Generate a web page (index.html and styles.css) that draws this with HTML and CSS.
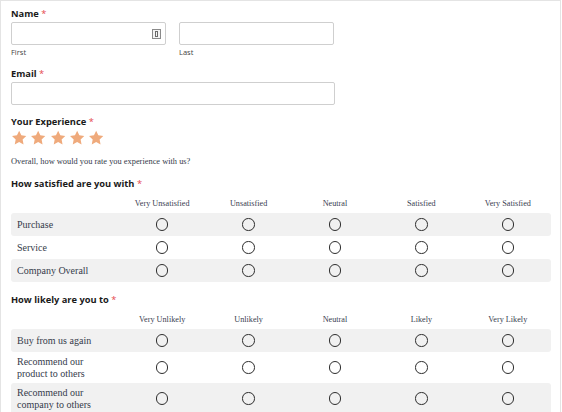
FILE: index.html
```html
<!DOCTYPE html>
<html>
<head>
<meta charset="utf-8">
<link rel="stylesheet" href="styles.css">
</head>
<body>
<div class="form">
  <div class="field">
    <div class="label">Name <span class="req">*</span></div>
    <div class="name-row">
      <div class="name-col">
        <div class="input">
          <svg class="autofill" width="9" height="10" viewBox="0 0 9 10"><rect x="0.5" y="0.5" width="8" height="9" fill="#f4f4f4" stroke="#8a8a8a"/><rect x="3.5" y="2.5" width="2" height="5" fill="none" stroke="#6a6a6a"/></svg>
        </div>
        <div class="sublabel">First</div>
      </div>
      <div class="name-col">
        <div class="input"></div>
        <div class="sublabel">Last</div>
      </div>
    </div>
  </div>

  <div class="field field-email">
    <div class="label">Email <span class="req">*</span></div>
    <div class="input input-wide"></div>
  </div>

  <div class="field field-exp">
    <div class="label">Your Experience <span class="req">*</span></div>
    <div class="stars">
      <svg class="star" viewBox="0 0 24 24"><path d="M12 1.2l3.2 6.7 7.3.9-5.4 5.1 1.4 7.3L12 17.6l-6.5 3.6 1.4-7.3-5.4-5.1 7.3-.9z"/></svg>
      <svg class="star" viewBox="0 0 24 24"><path d="M12 1.2l3.2 6.7 7.3.9-5.4 5.1 1.4 7.3L12 17.6l-6.5 3.6 1.4-7.3-5.4-5.1 7.3-.9z"/></svg>
      <svg class="star" viewBox="0 0 24 24"><path d="M12 1.2l3.2 6.7 7.3.9-5.4 5.1 1.4 7.3L12 17.6l-6.5 3.6 1.4-7.3-5.4-5.1 7.3-.9z"/></svg>
      <svg class="star" viewBox="0 0 24 24"><path d="M12 1.2l3.2 6.7 7.3.9-5.4 5.1 1.4 7.3L12 17.6l-6.5 3.6 1.4-7.3-5.4-5.1 7.3-.9z"/></svg>
      <svg class="star" viewBox="0 0 24 24"><path d="M12 1.2l3.2 6.7 7.3.9-5.4 5.1 1.4 7.3L12 17.6l-6.5 3.6 1.4-7.3-5.4-5.1 7.3-.9z"/></svg>
    </div>
    <div class="desc">Overall, how would you rate you experience with us?</div>
  </div>

  <div class="field field-lik1">
    <div class="label">How satisfied are you with <span class="req">*</span></div>
    <div class="likert">
      <div class="lk-head">
        <div></div>
        <div>Very Unsatisfied</div>
        <div>Unsatisfied</div>
        <div>Neutral</div>
        <div>Satisfied</div>
        <div>Very Satisfied</div>
      </div>
      <div class="lk-row alt">
        <div class="lk-label">Purchase</div>
        <div class="cell"><span class="radio"></span></div>
        <div class="cell"><span class="radio"></span></div>
        <div class="cell"><span class="radio"></span></div>
        <div class="cell"><span class="radio"></span></div>
        <div class="cell"><span class="radio"></span></div>
      </div>
      <div class="lk-row">
        <div class="lk-label">Service</div>
        <div class="cell"><span class="radio"></span></div>
        <div class="cell"><span class="radio"></span></div>
        <div class="cell"><span class="radio"></span></div>
        <div class="cell"><span class="radio"></span></div>
        <div class="cell"><span class="radio"></span></div>
      </div>
      <div class="lk-row alt">
        <div class="lk-label">Company Overall</div>
        <div class="cell"><span class="radio"></span></div>
        <div class="cell"><span class="radio"></span></div>
        <div class="cell"><span class="radio"></span></div>
        <div class="cell"><span class="radio"></span></div>
        <div class="cell"><span class="radio"></span></div>
      </div>
    </div>
  </div>

  <div class="field field-lik2">
    <div class="label">How likely are you to <span class="req">*</span></div>
    <div class="likert">
      <div class="lk-head">
        <div></div>
        <div>Very Unlikely</div>
        <div>Unlikely</div>
        <div>Neutral</div>
        <div>Likely</div>
        <div>Very Likely</div>
      </div>
      <div class="lk-row alt">
        <div class="lk-label">Buy from us again</div>
        <div class="cell"><span class="radio"></span></div>
        <div class="cell"><span class="radio"></span></div>
        <div class="cell"><span class="radio"></span></div>
        <div class="cell"><span class="radio"></span></div>
        <div class="cell"><span class="radio"></span></div>
      </div>
      <div class="lk-row tall">
        <div class="lk-label">Recommend our product to others</div>
        <div class="cell"><span class="radio"></span></div>
        <div class="cell"><span class="radio"></span></div>
        <div class="cell"><span class="radio"></span></div>
        <div class="cell"><span class="radio"></span></div>
        <div class="cell"><span class="radio"></span></div>
      </div>
      <div class="lk-row alt tall">
        <div class="lk-label">Recommend our company to others</div>
        <div class="cell"><span class="radio"></span></div>
        <div class="cell"><span class="radio"></span></div>
        <div class="cell"><span class="radio"></span></div>
        <div class="cell"><span class="radio"></span></div>
        <div class="cell"><span class="radio"></span></div>
      </div>
    </div>
  </div>
</div>
</body>
</html>
```
FILE: styles.css
```css
html, body {
  margin: 0;
  padding: 0;
  background: #ffffff;
}

.form {
  box-sizing: border-box;
  width: 561px;
  min-height: 420px;
  border: 1px solid #e4e4e4;
  border-bottom: none;
  padding: 6px 9px 0 10px;
  font-family: "Open Sans", "Liberation Sans", sans-serif;
  color: #222;
}

.label {
  font-family: "Open Sans", sans-serif;
  font-weight: 700;
  font-size: 9.3px;
  line-height: 14px;
  height: 14px;
  color: #1a1a1a;
  margin-bottom: 1px;
}

.req {
  color: #e5484d;
  font-weight: 400;
}

.name-row {
  display: flex;
  gap: 13px;
}

.name-col {
  width: 155px;
}

.input {
  box-sizing: border-box;
  height: 23px;
  border: 1px solid #cfcfcf;
  border-radius: 2px;
  background: #fff;
  display: flex;
  align-items: center;
  justify-content: flex-end;
  padding-right: 4px;
}

.input-wide {
  width: 324px;
}

.autofill {
  display: block;
}

.sublabel {
  font-family: "Open Sans", sans-serif;
  font-size: 7.5px;
  line-height: 10px;
  color: #444;
  margin-top: 2px;
}

.field-email {
  margin-top: 10px;
}

.field-exp {
  margin-top: 10px;
}

.stars {
  display: flex;
  gap: 3px;
  margin-top: 1px;
  height: 16px;
}

.star {
  width: 16.3px;
  height: 16.3px;
  fill: #efaa7c;
}

.desc {
  font-family: "Liberation Serif", serif;
  font-size: 8.4px;
  line-height: 12px;
  color: #333a4a;
  margin-top: 10px;
}

.field-lik1 {
  margin-top: 9px;
}

.field-lik2 {
  margin-top: 11px;
}

.likert {
  width: 540px;
}

.lk-head,
.lk-row {
  display: grid;
  grid-template-columns: 108px repeat(5, 1fr);
  align-items: center;
}

.lk-head {
  font-family: "Liberation Serif", serif;
  font-size: 8.2px;
  line-height: 12px;
  color: #3a4050;
  text-align: center;
  margin-top: 7px;
  margin-bottom: 3px;
}

.lk-row {
  height: 23px;
  border-radius: 3px;
}

.lk-row.tall {
  height: 31px;
}

.lk-row.alt {
  background: #f1f1f1;
}

.lk-label {
  font-family: "Liberation Serif", serif;
  font-size: 10px;
  line-height: 11.5px;
  color: #353b4b;
  padding-left: 6px;
  padding-right: 24px;
}

.cell {
  display: flex;
  justify-content: center;
  align-items: center;
}

.radio {
  box-sizing: border-box;
  width: 12.5px;
  height: 12.5px;
  border: 1.3px solid #2e2e2e;
  border-radius: 50%;
}
```
